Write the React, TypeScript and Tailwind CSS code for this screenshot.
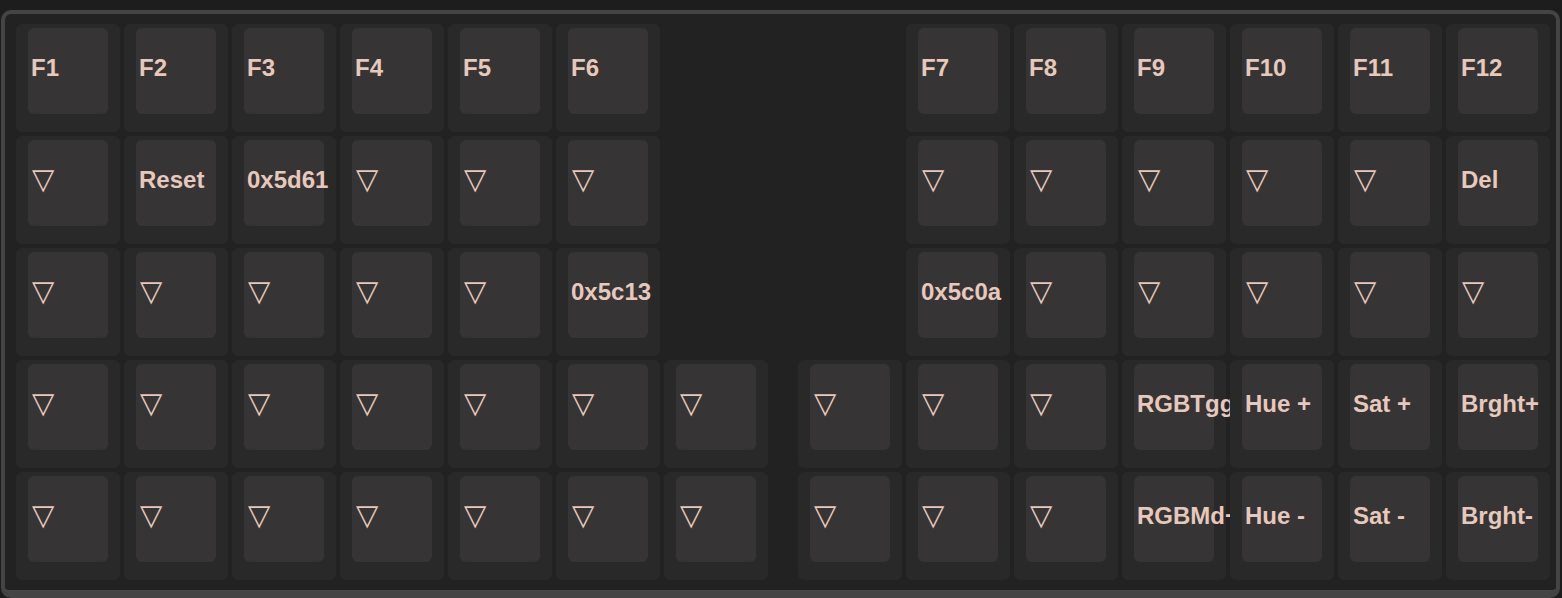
const T = "▽";

type Cell = string | null;

const rows: Cell[][] = [
  ["F1", "F2", "F3", "F4", "F5", "F6", null, null, "F7", "F8", "F9", "F10", "F11", "F12"],
  [T, "Reset", "0x5d61", T, T, T, null, null, T, T, T, T, T, "Del"],
  [T, T, T, T, T, "0x5c13", null, null, "0x5c0a", T, T, T, T, T],
  [T, T, T, T, T, T, T, T, T, T, "RGBTggl", "Hue +", "Sat +", "Brght+"],
  [T, T, T, T, T, T, T, T, T, T, "RGBMd+", "Hue -", "Sat -", "Brght-"],
];

const Key: React.FC<{ label: string }> = ({ label }) => {
  const isTrans = label === T;
  return (
    <div className="relative h-full w-full rounded-md bg-[#292929] px-3 pt-1 pb-[18px]">
      <div className="h-full w-full rounded-md bg-[#363435] pt-[28px]">
        {isTrans ? (
          <span className="-mt-[3px] block whitespace-nowrap pl-[4px] text-[29px] leading-none text-[#e6c8bc] font-['DejaVu_Sans',sans-serif]">
            {label}
          </span>
        ) : (
          <span className="block whitespace-nowrap pl-[3px] text-[24px] font-bold leading-none text-[#e6c8bc] font-['Liberation_Sans',Arial,sans-serif]">
            {label}
          </span>
        )}
      </div>
    </div>
  );
};

export default function App() {
  return (
    <div className="h-[598px] w-[1562px] overflow-hidden bg-[#1d1d1d] pt-[10px] pl-px pr-[2px]">
      <div className="h-[588px] rounded-[10px] border-4 border-b-8 border-[#444444] bg-[#222222] pt-[10px] pl-[11px]">
        <div className="grid grid-cols-[repeat(7,104px)_22px_repeat(7,104px)] grid-rows-[repeat(5,108px)] gap-1">
          {rows.map((row, r) =>
            [...row.slice(0, 7), "__gap", ...row.slice(7)].map((cell, c) =>
              cell === "__gap" || cell === null ? (
                <div key={`${r}-${c}`} />
              ) : (
                <Key key={`${r}-${c}`} label={cell} />
              )
            )
          )}
        </div>
      </div>
    </div>
  );
}
